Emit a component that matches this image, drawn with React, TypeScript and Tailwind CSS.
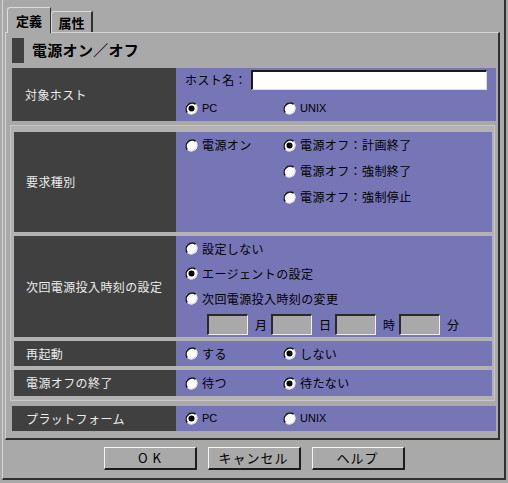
import React from "react";

function Radio({ checked = false }: { checked?: boolean }) {
  return (
    <svg width="13" height="13" viewBox="0 0 13 13" className="shrink-0">
      <circle cx="6.5" cy="6.5" r="6" fill="#ffffff" />
      <path d="M 2.3 10.7 A 6 6 0 0 1 10.7 2.3" stroke="#1a1a1a" strokeWidth="1.6" fill="none" />
      <path d="M 10.7 2.3 A 6 6 0 0 1 2.3 10.7" stroke="#d8d8d8" strokeWidth="1" fill="none" />
      {checked && <circle cx="6.5" cy="6.5" r="3" fill="#000000" />}
    </svg>
  );
}

function RadioItem({ checked, label, latin }: { checked?: boolean; label: string; latin?: boolean }) {
  return (
    <div className="flex items-center">
      <Radio checked={checked} />
      <span
        className={
          latin
            ? "ml-[4px] text-[11px] font-['Liberation_Sans',sans-serif] text-black leading-none"
            : "ml-[4px] text-[12px] text-black leading-none tracking-[0.4px]"
        }
      >
        {label}
      </span>
    </div>
  );
}

function TimeBox() {
  return (
    <div className="w-[41px] h-[21px] bg-[#a9a9a9] border-t-2 border-l-2 border-t-[#2a2a2a] border-l-[#2a2a2a] border-b border-r border-b-[#ececec] border-r-[#ececec]" />
  );
}

function Btn({ children, wide }: { children: React.ReactNode; wide?: boolean }) {
  return (
    <div
      className={
        "w-[93px] h-[23px] flex items-center justify-center bg-[#a9a9a9] border-t border-l border-t-[#f4f4f4] border-l-[#f4f4f4] border-b-2 border-r-2 border-b-[#1c1c1c] border-r-[#1c1c1c] text-[13px] text-black " +
        (wide ? "tracking-[5px] pl-[5px]" : "tracking-[1px]")
      }
    >
      {children}
    </div>
  );
}

export default function App() {
  const dark = "bg-[#404040] text-[#ececec] text-[12px] tracking-[0.4px] flex items-center";
  const purple = "bg-[#7676b6] flex-1";
  return (
    <div className="w-[508px] h-[483px] bg-[#a9a9a9] pl-[2px] font-['Noto_Sans_CJK_JP',sans-serif] overflow-hidden">
      <div className="w-[504px] h-[480px] border-l border-l-[#d4d4d4] border-r-2 border-r-[#303030] border-b-2 border-b-[#303030] flex flex-col">
        {/* tabs */}
        <div className="flex items-start pl-[4px] pt-[7px] h-[33px] -mb-[1px] relative z-10">
          <div className="w-[44px] h-[26px] bg-[#a9a9a9] border-l border-t border-l-[#dcdcdc] border-t-[#dcdcdc] border-r border-r-[#303030] rounded-tl-[3px] flex items-start justify-center pt-[3px] text-[13px] font-bold text-black">
            定義
          </div>
          <div className="mt-[4px] w-[42px] h-[21px] bg-[#a9a9a9] border-l border-t border-l-[#dcdcdc] border-t-[#dcdcdc] border-r-2 border-r-[#303030] rounded-tl-[3px] flex items-start justify-center pt-[1px] text-[13px] font-bold text-black">
            属性
          </div>
        </div>
        {/* panel */}
        <div className="ml-[2px] w-[495px] border-t border-l border-t-[#d4d4d4] border-l-[#d4d4d4] border-r-2 border-r-[#303030] border-b-2 border-b-[#303030] flex flex-col pb-[7px]">
          {/* title */}
          <div className="ml-[6px] mt-[5px] h-[25px] flex items-center">
            <div className="w-[12px] h-[25px] bg-[#404040]" />
            <span className="ml-[8px] text-[15px] font-bold text-black tracking-[0.3px]">電源オン／オフ</span>
          </div>
          {/* section 1 */}
          <div className="ml-[6px] mr-[2px] mt-[5px] h-[53px] flex">
            <div className={dark + " w-[164px] pl-[13px]"}>対象ホスト</div>
            <div className={purple + " flex flex-col pl-[9px] pt-[2px]"}>
              <div className="h-[20px] flex items-center">
                <span className="text-[12px] text-black tracking-[0.4px] leading-none">ホスト名：</span>
                <div className="ml-[4px] w-[236px] h-[20px] bg-white border-t-2 border-l-2 border-t-[#1a1a1a] border-l-[#1a1a1a] border-b border-r border-b-[#dcdcdc] border-r-[#dcdcdc]" />
              </div>
              <div className="mt-[11px] h-[15px] flex items-center">
                <div className="w-[98px]">
                  <RadioItem checked label="PC" latin />
                </div>
                <RadioItem label="UNIX" latin />
              </div>
            </div>
          </div>
          {/* framed group */}
          <div className="ml-[4px] mr-[3px] mt-[4px] border border-[#c6c6c6] pl-[3px] pr-[2px] pt-[6px] pb-[4px] flex flex-col gap-[4px] bg-[#b2b2b2]">
            <div className="h-[100px] flex">
              <div className={dark + " w-[162px] pl-[12px]"}>要求種別</div>
              <div className={purple + " flex flex-col pl-[9px]"}>
                <div className="h-[26px] flex items-center">
                  <div className="w-[98px]">
                    <RadioItem label="電源オン" />
                  </div>
                  <RadioItem checked label="電源オフ：計画終了" />
                </div>
                <div className="h-[26px] flex items-center pl-[98px]">
                  <RadioItem label="電源オフ：強制終了" />
                </div>
                <div className="h-[26px] flex items-center pl-[98px]">
                  <RadioItem label="電源オフ：強制停止" />
                </div>
              </div>
            </div>
            <div className="h-[101px] flex">
              <div className={dark + " w-[162px] pl-[12px]"}>次回電源投入時刻の設定</div>
              <div className={purple + " flex flex-col pl-[9px]"}>
                <div className="h-[25px] flex items-center">
                  <RadioItem label="設定しない" />
                </div>
                <div className="h-[25px] flex items-center">
                  <RadioItem checked label="エージェントの設定" />
                </div>
                <div className="h-[25px] flex items-center">
                  <RadioItem label="次回電源投入時刻の変更" />
                </div>
                <div className="mt-[3px] h-[21px] flex items-center pl-[22px] text-[12px] text-black">
                  <TimeBox />
                  <span className="ml-[7px] mr-[4px] w-[12px] leading-none">月</span>
                  <TimeBox />
                  <span className="ml-[7px] mr-[4px] w-[12px] leading-none">日</span>
                  <TimeBox />
                  <span className="ml-[7px] mr-[4px] w-[12px] leading-none">時</span>
                  <TimeBox />
                  <span className="ml-[7px] w-[12px] leading-none">分</span>
                </div>
              </div>
            </div>
            <div className="h-[25px] flex">
              <div className={dark + " w-[162px] pl-[12px]"}>再起動</div>
              <div className={purple + " flex items-center pl-[9px]"}>
                <div className="w-[98px]">
                  <RadioItem label="する" />
                </div>
                <RadioItem checked label="しない" />
              </div>
            </div>
            <div className="h-[26px] flex">
              <div className={dark + " w-[162px] pl-[12px]"}>電源オフの終了</div>
              <div className={purple + " flex items-center pl-[9px]"}>
                <div className="w-[98px]">
                  <RadioItem label="待つ" />
                </div>
                <RadioItem checked label="待たない" />
              </div>
            </div>
          </div>
          {/* platform */}
          <div className="ml-[6px] mr-[2px] mt-[5px] h-[25px] flex">
            <div className={dark + " w-[164px] pl-[14px]"}>プラットフォーム</div>
            <div className={purple + " flex items-center pl-[9px]"}>
              <div className="w-[98px]">
                <RadioItem checked label="PC" latin />
              </div>
              <RadioItem label="UNIX" latin />
            </div>
          </div>
        </div>
        {/* buttons */}
        <div className="mt-[7px] flex justify-center gap-[11px] pl-[1px]">
          <Btn wide>OK</Btn>
          <Btn>キャンセル</Btn>
          <Btn>ヘルプ</Btn>
        </div>
      </div>
    </div>
  );
}
